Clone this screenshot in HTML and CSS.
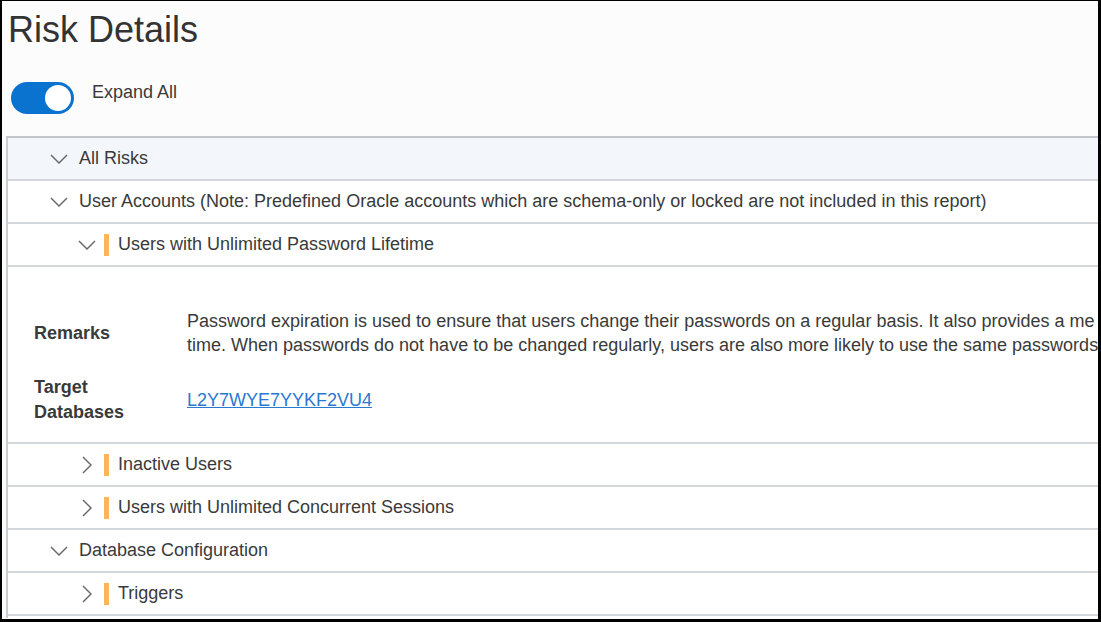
FILE: index.html
```html
<!DOCTYPE html>
<html lang="en">
<head>
<meta charset="utf-8">
<title>Risk Details</title>
<link rel="stylesheet" href="styles.css">
</head>
<body>
<div class="frame">
  <h1 class="title">Risk Details</h1>
  <div class="expand">
    <span class="toggle"><span class="knob"></span></span>
    <span class="expand-label">Expand All</span>
  </div>
  <div class="tree">
    <div class="row row-top lvl1">
      <svg class="chev" viewBox="0 0 18 10"><path d="M1 1 L9 9 L17 1"/></svg>
      <span class="label">All Risks</span>
    </div>
    <div class="row lvl1">
      <svg class="chev" viewBox="0 0 18 10"><path d="M1 1 L9 9 L17 1"/></svg>
      <span class="label">User Accounts (Note: Predefined Oracle accounts which are schema-only or locked are not included in this report)</span>
    </div>
    <div class="row lvl2">
      <svg class="chev" viewBox="0 0 18 10"><path d="M1 1 L9 9 L17 1"/></svg>
      <span class="bar"></span>
      <span class="label">Users with Unlimited Password Lifetime</span>
    </div>
    <div class="detail">
      <div class="dl">
        <div class="dt">Remarks</div>
        <div class="dd nowrap">Password expiration is used to ensure that users change their passwords on a regular basis. It also provides a me<br>time. When passwords do not have to be changed regularly, users are also more likely to use the same passwords</div>
        <div class="dt">Target<br>Databases</div>
        <div class="dd"><a class="link" href="#">L2Y7WYE7YYKF2VU4</a></div>
      </div>
    </div>
    <div class="row lvl2">
      <svg class="chev right" viewBox="0 0 10 18"><path d="M1 1 L9 9 L1 17"/></svg>
      <span class="bar"></span>
      <span class="label">Inactive Users</span>
    </div>
    <div class="row lvl2">
      <svg class="chev right" viewBox="0 0 10 18"><path d="M1 1 L9 9 L1 17"/></svg>
      <span class="bar"></span>
      <span class="label">Users with Unlimited Concurrent Sessions</span>
    </div>
    <div class="row lvl1">
      <svg class="chev" viewBox="0 0 18 10"><path d="M1 1 L9 9 L17 1"/></svg>
      <span class="label">Database Configuration</span>
    </div>
    <div class="row lvl2">
      <svg class="chev right" viewBox="0 0 10 18"><path d="M1 1 L9 9 L1 17"/></svg>
      <span class="bar"></span>
      <span class="label">Triggers</span>
    </div>
  </div>
</div>
</body>
</html>
```
FILE: styles.css
```css
html, body {
  margin: 0;
  padding: 0;
}
body {
  font-family: "Liberation Sans", Arial, sans-serif;
  color: #3a3a3a;
  background: #fff;
}
.frame {
  box-sizing: border-box;
  width: 1101px;
  height: 622px;
  border-style: solid;
  border-color: #000;
  border-width: 1px 3px 3px 2px;
  background: #fcfcfc;
  overflow: hidden;
}
.title {
  margin: 10px 0 0 6px;
  font-size: 36px;
  line-height: 38px;
  font-weight: normal;
  color: #333;
}
.expand {
  display: flex;
  align-items: flex-start;
  margin: 33px 0 0 9px;
  height: 32px;
}
.toggle {
  box-sizing: border-box;
  width: 63px;
  height: 32px;
  border-radius: 16px;
  background: #0a72cf;
  display: flex;
  align-items: center;
  justify-content: flex-end;
  padding-right: 3px;
}
.knob {
  width: 26px;
  height: 26px;
  border-radius: 50%;
  background: #fff;
}
.expand-label {
  margin-left: 18px;
  font-size: 18px;
  line-height: 18px;
  margin-top: 1px;
  color: #3a3a3a;
}
.tree {
  margin: 22px 0 0 4px;
  width: 1120px;
  border-left: 2px solid #c9cdd1;
  border-top: 2px solid #c2c6ca;
  background: #fff;
  padding-bottom: 2px;
}
.row {
  box-sizing: border-box;
  height: 43px;
  display: flex;
  align-items: center;
  border-bottom: 2px solid #d3d6da;
  font-size: 18px;
  white-space: nowrap;
}
.row-top {
  height: 43px;
  background: #f3f7fc;
}
.chev {
  flex: none;
  width: 18px;
  height: 10px;
  fill: none;
  stroke: #6b6b6b;
  stroke-width: 1.5;
}
.chev.right {
  width: 10px;
  height: 18px;
}
.lvl1 {
  padding-left: 42px;
}
.lvl1 .chev {
  margin-right: 11px;
}
.lvl2 {
  padding-left: 70px;
}
.lvl2 .chev {
  margin-left: 0;
  margin-right: 8px;
}
.lvl2 .chev.right {
  margin-left: 4px;
  margin-right: 12px;
}
.bar {
  flex: none;
  width: 5px;
  height: 22px;
  background: #fbb65a;
  margin-right: 9px;
}
.label {
  color: #3a3a3a;
}
.detail {
  box-sizing: border-box;
  height: 177px;
  border-bottom: 2px solid #d3d6da;
  padding: 42px 0 0 26px;
}
.dl {
  display: grid;
  grid-template-columns: 153px 1fr;
  row-gap: 18px;
  align-items: center;
}
.dt {
  font-size: 18px;
  line-height: 25px;
  font-weight: bold;
  color: #3a3a3a;
}
.dd {
  font-size: 18px;
  line-height: 24px;
  color: #3a3a3a;
}
.nowrap {
  white-space: nowrap;
}
.link {
  color: #2a78d0;
  text-decoration: underline;
}
```
